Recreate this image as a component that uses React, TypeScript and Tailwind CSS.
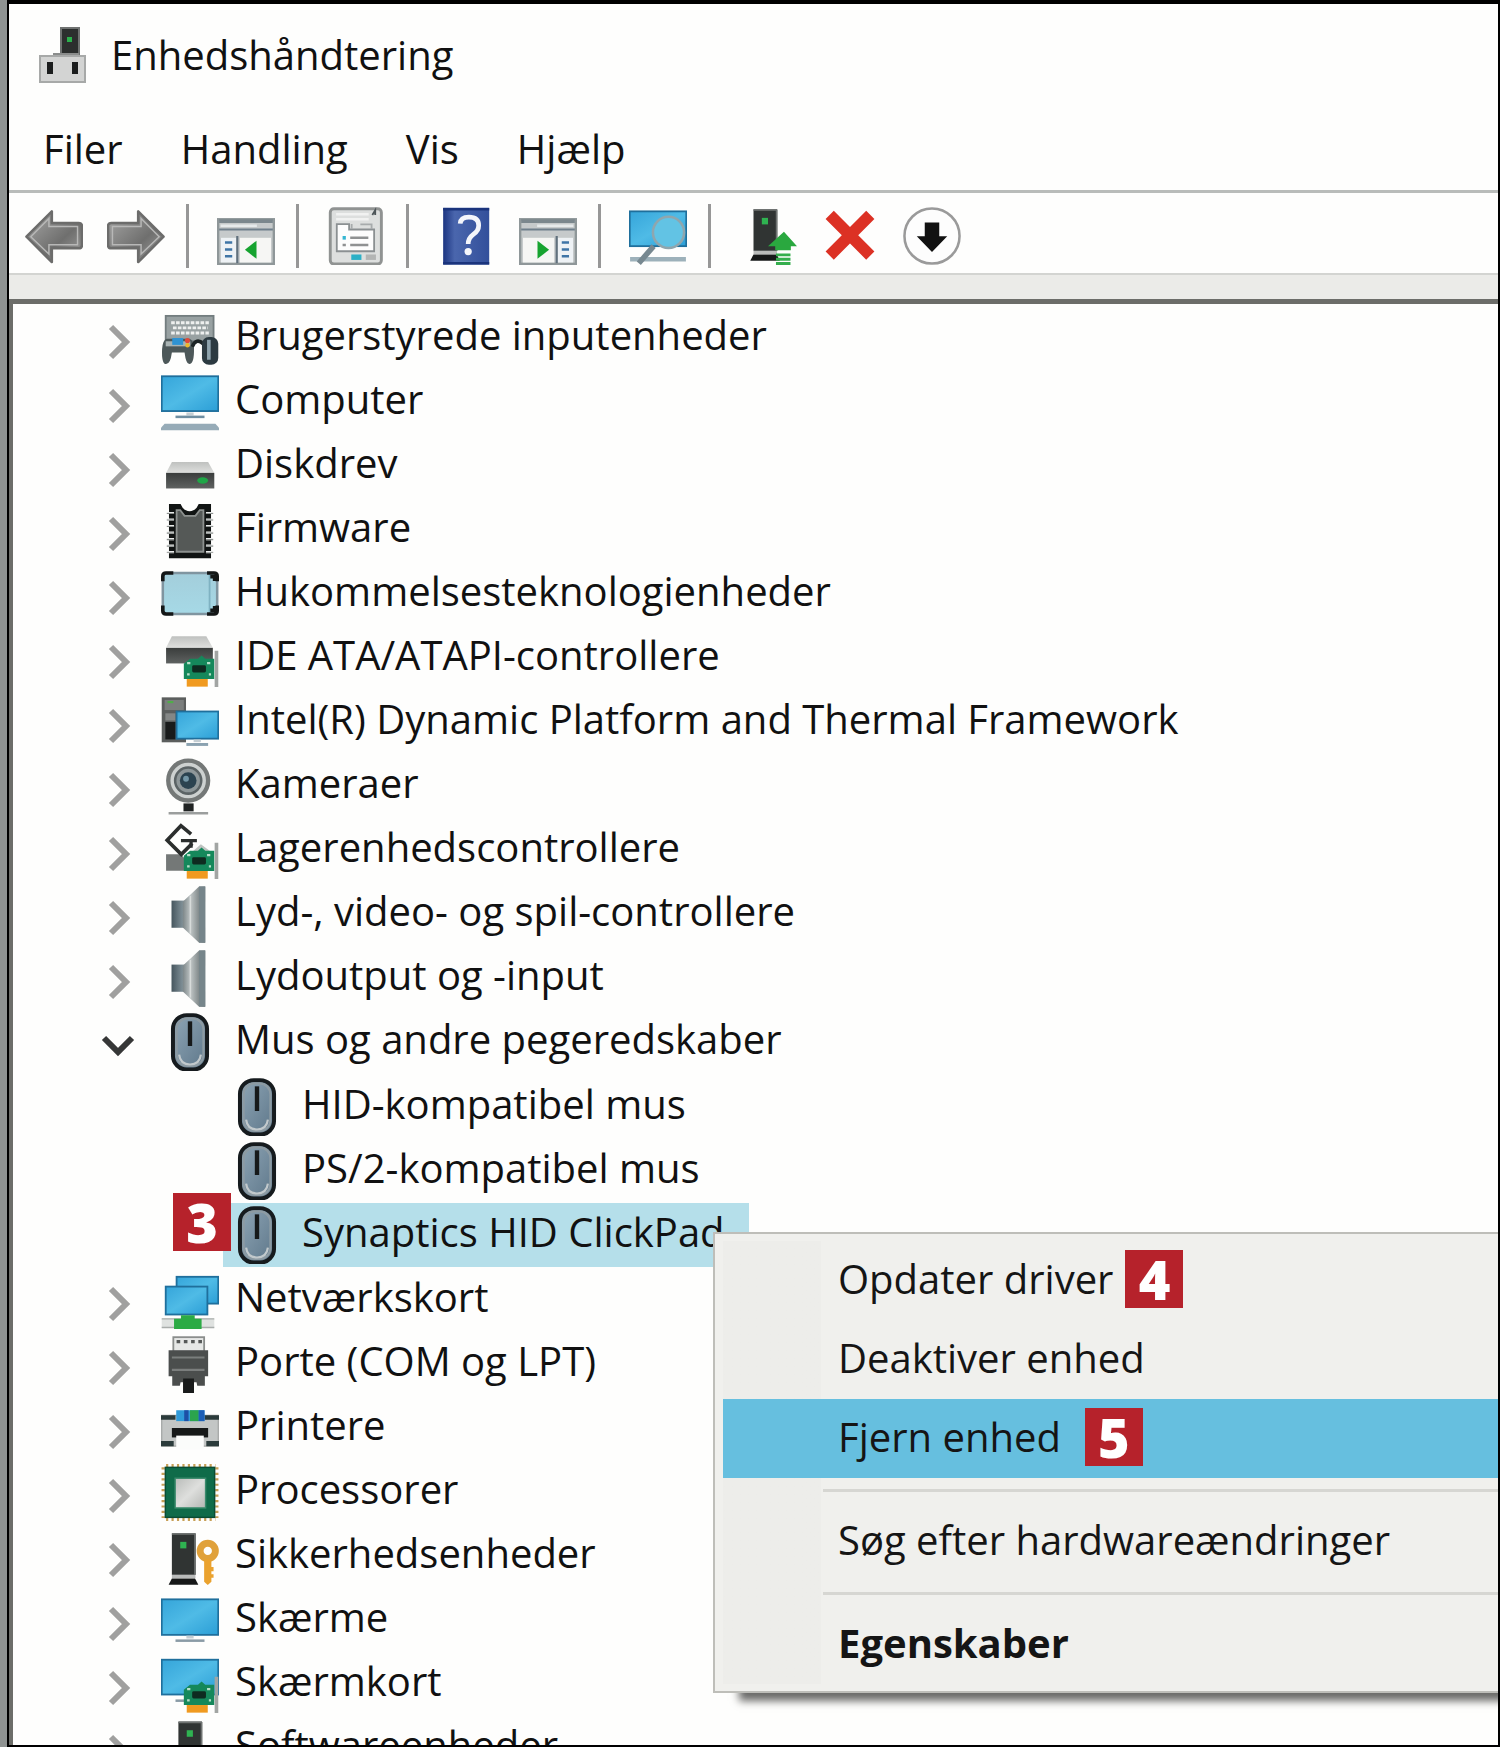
import type { ReactNode } from 'react'

type IconName =
  | 'hid'
  | 'computer'
  | 'disk'
  | 'firmware'
  | 'memory'
  | 'ide'
  | 'platform'
  | 'camera'
  | 'storage'
  | 'speaker'
  | 'mouse'
  | 'network'
  | 'port'
  | 'printer'
  | 'cpu'
  | 'security'
  | 'monitor'
  | 'display'
  | 'software'

interface Device {
  label: string
  icon: IconName
  children?: Device[]
  selected?: boolean
}

const DEVICES: Device[] = [
  { label: 'Brugerstyrede inputenheder', icon: 'hid' },
  { label: 'Computer', icon: 'computer' },
  { label: 'Diskdrev', icon: 'disk' },
  { label: 'Firmware', icon: 'firmware' },
  { label: 'Hukommelsesteknologienheder', icon: 'memory' },
  { label: 'IDE ATA/ATAPI-controllere', icon: 'ide' },
  { label: 'Intel(R) Dynamic Platform and Thermal Framework', icon: 'platform' },
  { label: 'Kameraer', icon: 'camera' },
  { label: 'Lagerenhedscontrollere', icon: 'storage' },
  { label: 'Lyd-, video- og spil-controllere', icon: 'speaker' },
  { label: 'Lydoutput og -input', icon: 'speaker' },
  {
    label: 'Mus og andre pegeredskaber',
    icon: 'mouse',
    children: [
      { label: 'HID-kompatibel mus', icon: 'mouse' },
      { label: 'PS/2-kompatibel mus', icon: 'mouse' },
      { label: 'Synaptics HID ClickPad', icon: 'mouse', selected: true },
    ],
  },
  { label: 'Netværkskort', icon: 'network' },
  { label: 'Porte (COM og LPT)', icon: 'port' },
  { label: 'Printere', icon: 'printer' },
  { label: 'Processorer', icon: 'cpu' },
  { label: 'Sikkerhedsenheder', icon: 'security' },
  { label: 'Skærme', icon: 'monitor' },
  { label: 'Skærmkort', icon: 'display' },
  { label: 'Softwareenheder', icon: 'software' },
]

/** 16-unit icon canvas shared by the toolbar and the tree. */
function Glyph({ children }: { children: ReactNode }) {
  return (
    <svg viewBox="0 0 16 16" className="size-[58px] shrink-0" aria-hidden>
      {children}
    </svg>
  )
}

/** Gradients used by several icons, defined once for the page. */
function Gradients() {
  return (
    <svg className="absolute size-0" aria-hidden>
      <defs>
        <linearGradient id="screen" x1="0" y1="0" x2="1" y2="1">
          <stop offset="0" stopColor="#35a5da" />
          <stop offset="0.5" stopColor="#4fbbe6" />
          <stop offset="1" stopColor="#2b9ed6" />
        </linearGradient>
        <linearGradient id="lid" x1="0" y1="0" x2="0" y2="1">
          <stop offset="0" stopColor="#bfc1bf" />
          <stop offset="1" stopColor="#dfe0de" />
        </linearGradient>
        <linearGradient id="drive" x1="0" y1="0" x2="0" y2="1">
          <stop offset="0" stopColor="#3a3d3c" />
          <stop offset="1" stopColor="#5f6261" />
        </linearGradient>
        <linearGradient id="cone" x1="0" y1="0" x2="1" y2="0">
          <stop offset="0" stopColor="#7c8688" />
          <stop offset="0.35" stopColor="#bfc5c5" />
          <stop offset="0.7" stopColor="#868e8f" />
          <stop offset="1" stopColor="#5a6568" />
        </linearGradient>
        <linearGradient id="cabinet" x1="0" y1="0" x2="1" y2="0">
          <stop offset="0" stopColor="#46565e" />
          <stop offset="1" stopColor="#8b9ba2" />
        </linearGradient>
        <linearGradient id="shell" x1="0" y1="0" x2="1" y2="1">
          <stop offset="0" stopColor="#8fa6b6" />
          <stop offset="1" stopColor="#5d7689" />
        </linearGradient>
        <linearGradient id="die" x1="0" y1="0" x2="1" y2="1">
          <stop offset="0" stopColor="#b9bcb9" />
          <stop offset="0.5" stopColor="#dedfdd" />
          <stop offset="1" stopColor="#b4b6b3" />
        </linearGradient>
        <linearGradient id="glass" x1="0" y1="0" x2="0" y2="1">
          <stop offset="0" stopColor="#a3cedb" />
          <stop offset="1" stopColor="#a6d9e6" />
        </linearGradient>
        <linearGradient id="steel" x1="0" y1="0" x2="1" y2="1">
          <stop offset="0" stopColor="#a9a9a8" />
          <stop offset="0.6" stopColor="#6f6f6e" />
          <stop offset="1" stopColor="#a2a2a1" />
        </linearGradient>
        <linearGradient id="book" x1="0" y1="0" x2="1" y2="0">
          <stop offset="0" stopColor="#1c3581" />
          <stop offset="0.25" stopColor="#4a66ad" />
          <stop offset="1" stopColor="#33509b" />
        </linearGradient>
      </defs>
    </svg>
  )
}

function Screen({ x, y, w, h }: { x: number; y: number; w: number; h: number }) {
  return (
    <rect x={x + 0.2} y={y + 0.2} width={w - 0.4} height={h - 0.4} fill="url(#screen)" stroke="#1f6f9c" strokeWidth="0.5" />
  )
}

function Card() {
  return (
    <>
      <path d="M6.3 9.6 8 8.2h2.2l1-.9 1 .9h2.5v5.6H6.3z" fill="#15885b" />
      <rect x="8.6" y="10" width="3.8" height="2" rx="0.4" fill="#0e2b20" />
      <path d="M7.2 9.4h.9M12.7 9.4h.9M7.2 12.5h.7M13.2 12.5h.6" stroke="#b7dfc9" strokeWidth="0.6" />
      <rect x="7.1" y="13.8" width="5.8" height="2.1" fill="#f09a20" />
      <rect x="14.8" y="6" width="1" height="10" fill="#a2a5a3" />
    </>
  )
}

function Tower() {
  return (
    <>
      <rect x="3" y="1.8" width="6.5" height="11.4" fill="#303433" />
      <path d="M3 1.9h6.5M9.4 1.8v11.4" stroke="#6f7372" strokeWidth="0.5" />
      <rect x="5.3" y="4.1" width="1.7" height="1.8" fill="#2fb351" />
      <rect x="3" y="13.2" width="6.5" height="0.9" fill="#b9bbba" />
      <path d="M3 14.2h6.4l.9 1.7H2.1z" fill="#161818" />
    </>
  )
}

function DeviceIcon({ name }: { name: IconName }) {
  switch (name) {
    case 'hid':
      return (
        <Glyph>
          <rect x="1.3" y="1.9" width="13.2" height="7" fill="#98a1a2" stroke="#737d7f" strokeWidth="0.5" />
          <path d="M2.8 3.8h10.4M3.3 5.2h9.6M2.8 6.6h10.4" stroke="#eef0ef" strokeWidth="0.8" strokeDasharray="1 .35" />
          <path
            d="M1.6 8.2h6.3q1.1.4 1.2 2.7.1 4.2-1.3 4.3-.9 0-1.3-3.2H3Q2.6 15.2 1.4 15.2.1 15.1.3 11q.2-2.5 1.3-2.8z"
            fill="#4d5859"
          />
          <path d="M1.3 9.6h6.8" stroke="#a9b3b3" strokeWidth="1.4" />
          <rect x="3.1" y="8" width="3" height="1.9" fill="#2f93d3" />
          <circle cx="7.3" cy="8.7" r="0.7" fill="#e2483a" />
          <circle cx="7.3" cy="10" r="0.6" fill="#edb82b" />
          <path d="M8.6 10.4q1.2-2.6 3-.8" fill="none" stroke="#1d2526" strokeWidth="1" />
          <rect x="11.3" y="7.7" width="4.5" height="7.7" rx="1.9" fill="#2c3a41" />
          <path d="M13.2 8.5v5.5" stroke="#8ea3ad" strokeWidth="1" />
        </Glyph>
      )
    case 'computer':
      return (
        <Glyph>
          <Screen x={0} y={0.7} w={16} h={10} />
          <path d="M7 11.3h2" stroke="#c5ced3" strokeWidth="0.8" />
          <path d="M4 12.1h8" stroke="#6f8ea1" strokeWidth="0.7" />
          <path d="M1 14h14l1 1.1v.7H0v-.7z" fill="#96abb7" />
        </Glyph>
      )
    case 'disk':
      return (
        <Glyph>
          <path d="M3 6.9h10l1.7 3H1.4z" fill="url(#lid)" />
          <rect x="1.4" y="9.9" width="13.3" height="4.3" fill="url(#drive)" />
          <ellipse cx="11.5" cy="12" rx="1.5" ry="0.9" fill="#1fa647" />
        </Glyph>
      )
    case 'firmware':
      return (
        <Glyph>
          <path d="M2.2.8h3.2q.8 2 2.5 2t2.5-2h3.4v15H2.2z" fill="#111413" />
          <path d="M4.3 2.5h1l1.2 1.6h3l1.2-1.6h1V14H4.3z" fill="#555957" stroke="#8d918f" strokeWidth="0.5" />
          <path d="M2.6 3v11.4M13.4 3v11.4" stroke="#e9ebea" strokeWidth="2" strokeDasharray=".6 1.2" />
          <path d="M2.6 3.3v11M13.4 3.3v11" stroke="#8e9290" strokeWidth="2" strokeDasharray=".3 1.5" />
        </Glyph>
      )
    case 'memory':
      return (
        <Glyph>
          <rect x="0.5" y="2.2" width="15" height="11.3" rx="0.9" fill="url(#glass)" stroke="#8095a0" strokeWidth="0.7" />
          <path d="M13.4 2.5v10.8" stroke="#7fb2c2" strokeWidth="0.5" />
          <path
            d="M.5 4.5V3.1q0-.9.9-.9h2M12.7 2.2h1.9q.9 0 .9.9v1.4M.5 11.2v1.4q0 .9.9.9h2M12.7 13.5h1.9q.9 0 .9-.9v-1.4"
            fill="none"
            stroke="#141717"
            strokeWidth="1"
          />
          <path d="M13.6 3.2h1.2v1.2M13.6 12.5h1.2v-1.2" fill="none" stroke="#141717" strokeWidth="1" />
        </Glyph>
      )
    case 'ide':
      return (
        <Glyph>
          <path d="M3 2h9.5l1.8 3.2H1.4z" fill="url(#lid)" />
          <rect x="1.4" y="5.2" width="12.9" height="4.3" fill="url(#drive)" />
          <Card />
        </Glyph>
      )
    case 'platform':
      return (
        <Glyph>
          <rect x="0.2" y="1.2" width="6.7" height="12.4" fill="#5b5e5d" />
          <rect x="1" y="1.9" width="5.3" height="2.8" fill="#7b7e7d" />
          <rect x="1.2" y="5.6" width="2.8" height="2" fill="#848786" />
          <rect x="1.2" y="8" width="2.8" height="4.8" fill="#191b1b" />
          <path d="M1.8 2.5h1.6" stroke="#4fae48" strokeWidth="0.6" />
          <Screen x={4.1} y={4.9} w={11.9} h={7.9} />
          <path d="M7 14.2h6" stroke="#8ba2b0" strokeWidth="0.8" />
          <path d="M9 13.2h2" stroke="#c5ced3" strokeWidth="0.7" />
        </Glyph>
      )
    case 'camera':
      return (
        <Glyph>
          <circle cx="7.5" cy="6.5" r="5.5" fill="#cdd1d0" stroke="#747877" strokeWidth="1.2" />
          <circle cx="7.5" cy="6.5" r="3.6" fill="#8e9799" stroke="#5b6365" strokeWidth="0.7" />
          <circle cx="7.5" cy="6.5" r="2.3" fill="#2b4350" />
          <circle cx="6.9" cy="6" r="0.8" fill="#7396a6" />
          <rect x="6.2" y="12.8" width="2.8" height="2.2" fill="#202323" />
          <path d="M2.1 15.5H13" stroke="#9b9e9d" strokeWidth="0.7" />
        </Glyph>
      )
    case 'storage':
      return (
        <Glyph>
          <path d="M1.4 9.2h4l2 2v2.5h-6z" fill="#747877" />
          <path d="M8 9l3-2.6 2.8 2.1z" fill="#bfc3c1" />
          <path d="M8.3 3.6 5.5 1.3 1.7 5.3l3.9 3.9 3-3" fill="none" stroke="#2b2e2d" strokeWidth="1" />
          <path d="M9.9 5.4H5.5M8.3 5.4v2" stroke="#2b2e2d" strokeWidth="0.9" />
          <Card />
        </Glyph>
      )
    case 'speaker':
      return (
        <Glyph>
          <rect x="2.9" y="4.3" width="3.7" height="7.5" fill="url(#cabinet)" />
          <path d="M6 4.6 10.5.4h1.7v15.5h-1.7L6 11.7z" fill="url(#cone)" />
          <path d="M10.5.4h1.7v15.5h-1.7z" fill="#76858a" />
          <path d="M8.1 3v10.4" stroke="#d7dbda" strokeWidth="0.4" />
        </Glyph>
      )
    case 'mouse':
      return (
        <Glyph>
          <rect x="3.3" y="0.6" width="9.4" height="15" rx="3.8" fill="url(#shell)" stroke="#161b1e" strokeWidth="1.1" />
          <rect x="4.3" y="1.5" width="7.4" height="13.1" rx="3" fill="none" stroke="#8d9ba3" strokeWidth="0.6" />
          <path d="M5 11.5q.3 2.7 3 2.7t3-2.7" fill="none" stroke="#c2c9cc" strokeWidth="0.6" />
          <path d="M8 2.3v6.8" stroke="#16191a" strokeWidth="1.2" />
        </Glyph>
      )
    case 'network':
      return (
        <Glyph>
          <Screen x={4.1} y={1.4} w={11.9} h={7.8} />
          <Screen x={1.1} y={4.1} w={11.9} h={8.1} />
          <path d="M.2 13.1h14.5v2.6H.2z" fill="#dfe2e0" />
          <path d="M.2 13.2h14.5M.2 15.6h14.5" stroke="#a9adab" strokeWidth="0.4" />
          <path d="M5.5 12.2h3.8v1h1.9V16H3.6v-2.8h1.9z" fill="#2cab45" />
        </Glyph>
      )
    case 'port':
      return (
        <Glyph>
          <rect x="3.4" y="0.6" width="8.5" height="4" fill="#e6e8e6" stroke="#8b8e8c" strokeWidth="0.5" />
          <path d="M4.3 1.8h1M6.3 1.8h1M8.3 1.8h1M10.3 1.8h1" stroke="#565958" strokeWidth="0.9" />
          <path d="M2.1 4.2H13v7.2h-.9V14H10l-.2-1h-.7v3h-3v-3h-.7l-.2 1H3.1v-2.6h-1z" fill="#4b4e4d" />
          <path d="M3 6.2h9M3 9.6h9" stroke="#7b7e7d" strokeWidth="0.6" />
          <path d="M6.1 12h3v4h-3z" fill="#191b1b" />
        </Glyph>
      )
    case 'printer':
      return (
        <Glyph>
          <rect x="0.2" y="4.5" width="15.6" height="8.5" fill="#c3c6c5" stroke="#9a9d9c" strokeWidth="0.3" />
          <path d="M0 4.5h4v1.2H0zM12 4.5h4v1.2h-4zM0 11.6h3.5V13H0zM12.5 11.6H16V13h-3.5z" fill="#2b3b3b" />
          <rect x="3" y="8" width="10" height="2.6" fill="#161818" />
          <rect x="4.2" y="10.1" width="7.6" height="3.9" fill="#fbfcfb" />
          <rect x="4.2" y="3.1" width="7.8" height="3" fill="#2f9ad9" />
          <path d="M6.4 3.1h1.2v3H6.4z" fill="#1d4fa6" />
          <path d="M8 3.1h2.4v3H8z" fill="#2ba44d" />
          <path d="M10.4 3.1H12v3h-1.6z" fill="#1d5fb6" />
        </Glyph>
      )
    case 'cpu':
      return (
        <Glyph>
          <path d="M1.4.7H15M1.4 15.6H15M.6 1.2v14M15.4 1.2v14" stroke="#c79f56" strokeWidth="0.9" strokeDasharray=".6 .9" />
          <rect x="1.2" y="1.2" width="13.6" height="13.8" fill="#0f6b49" stroke="#0a4c34" strokeWidth="0.4" />
          <rect x="3.9" y="4.2" width="8.4" height="8.2" fill="url(#die)" stroke="#3b8a6c" strokeWidth="0.4" />
        </Glyph>
      )
    case 'security':
      return (
        <Glyph>
          <Tower />
          <circle cx="12.9" cy="6.6" r="2.1" fill="none" stroke="#e0a13a" strokeWidth="1.9" />
          <path d="M11.9 8.9h2v6.2l-1 .9-1-.9z" fill="#eaa22e" />
          <path d="M13.9 11v1.2M13.9 13v1" stroke="#eaa22e" strokeWidth="1.2" />
        </Glyph>
      )
    case 'monitor':
      return (
        <Glyph>
          <Screen x={0} y={2.1} w={16} h={10.2} />
          <path d="M7 12.7h2" stroke="#c5ced3" strokeWidth="0.8" />
          <path d="M4 13.7h8" stroke="#8a9ba6" strokeWidth="0.7" />
        </Glyph>
      )
    case 'display':
      return (
        <Glyph>
          <Screen x={0} y={1.1} w={16} h={10} />
          <path d="M4 12.6h4" stroke="#8a9ba6" strokeWidth="0.7" />
          <Card />
        </Glyph>
      )
    case 'software':
      return (
        <Glyph>
          <g transform="translate(1.8 -1)">
            <Tower />
          </g>
        </Glyph>
      )
  }
}

function StepBadge({ step, className = '' }: { step: number; className?: string }) {
  return (
    <span
      className={`flex size-[58px] items-center justify-center bg-[#b6222b] text-[54px] leading-none font-extrabold text-white ${className}`}
    >
      {step}
    </span>
  )
}

function Chevron({ open }: { open: boolean }) {
  return (
    <button type="button" aria-label={open ? 'Skjul' : 'Udvid'} className="mt-2 flex w-10 shrink-0 justify-center">
      <svg viewBox="0 0 40 40" className="size-10" fill="none" strokeWidth="6" aria-hidden>
        {open ? <path d="M7 12 21 26 35 12" stroke="#363737" /> : <path d="M14 5 29 20 14 35" stroke="#a0a09f" />}
      </svg>
    </button>
  )
}

function MenuItem({ label, step, active, bold }: { label: string; step?: number; active?: boolean; bold?: boolean }) {
  return (
    <button
      type="button"
      role="menuitem"
      className={`flex h-[79px] w-full items-center pb-1 pl-[115px] whitespace-nowrap ${active ? 'bg-[#66bfdf]' : ''} ${
        bold ? 'font-bold' : ''
      }`}
    >
      {label}
      {step && <StepBadge step={step} className={active ? 'ml-6' : 'ml-3'} />}
    </button>
  )
}

function MenuDivider() {
  return (
    <div role="separator" className="flex h-6 items-center pl-[100px]">
      <div className="h-[3px] w-full bg-[#d6d6d2]" />
    </div>
  )
}

function ContextMenu() {
  return (
    <div
      role="menu"
      className="absolute top-[29px] right-0 left-[700px] z-10 border-y-2 border-l-2 border-[#bebeb9] bg-[#f0f0ed] py-[7px] pl-2 text-[#151515] shadow-[24px_10px_8px_-2px_#6b6b69]"
    >
      <div className="bg-linear-to-r from-[#ededea] from-[98px] to-[#f0f0ed] to-[98px]">
        <MenuItem label="Opdater driver" step={4} />
        <MenuItem label="Deaktiver enhed" />
        <MenuItem label="Fjern enhed" step={5} active />
        <MenuDivider />
        <MenuItem label="Søg efter hardwareændringer" />
        <MenuDivider />
        <MenuItem label="Egenskaber" bold />
      </div>
    </div>
  )
}

function DeviceRow({ device }: { device: Device }) {
  return (
    <li role="treeitem" aria-selected={!!device.selected} aria-expanded={device.children ? true : undefined}>
      <div className="flex h-16 items-center pl-[84px]">
        <Chevron open={!!device.children} />
        <div className="ml-6 flex h-16 items-center gap-4">
          <DeviceIcon name={device.icon} />
          <span className="pb-1.5 whitespace-nowrap">{device.label}</span>
        </div>
      </div>
      {device.children && (
        <ul role="group" className="py-px">
          {device.children.map((child) => (
            <ChildRow key={child.label} device={child} />
          ))}
        </ul>
      )}
    </li>
  )
}

function ChildRow({ device }: { device: Device }) {
  return (
    <li role="treeitem" aria-selected={!!device.selected} className="relative flex h-16 pl-[210px]">
      <div className={`flex items-center gap-4 pr-6 pl-[5px] ${device.selected ? 'bg-[#b5dfea]' : ''}`}>
        <DeviceIcon name={device.icon} />
        <span className="pb-1.5 whitespace-nowrap">{device.label}</span>
      </div>
      {device.selected && (
        <>
          <StepBadge step={3} className="absolute -top-2.5 left-40" />
          <ContextMenu />
        </>
      )}
    </li>
  )
}

function ToolButton({ label, className = '', children }: { label: string; className?: string; children: ReactNode }) {
  return (
    <button type="button" aria-label={label} className={`shrink-0 ${className}`}>
      <Glyph>{children}</Glyph>
    </button>
  )
}

function ToolDivider() {
  return <div className="mr-7 ml-[21px] h-16 w-[3px] shrink-0 bg-[#979797]" />
}

/** Console window with a side pane; mirrored when the pane is on the right. */
function PaneWindow({ mirrored }: { mirrored?: boolean }) {
  return (
    <g transform={mirrored ? 'translate(16 0) scale(-1 1)' : undefined}>
      <rect x="0.3" y="3.4" width="15.4" height="12.3" fill="#c6cacb" stroke="#8f9799" strokeWidth="0.7" />
      <path d="M.6 3.9h14.8" stroke="#7b878d" strokeWidth="1" />
      <path d="M1 5.200h10" stroke="#e6eaeb" strokeWidth="0.7" />
      <path d="M.6 6.2h14.8" stroke="#6f7f8b" strokeWidth="0.6" />
      <rect x="1.1" y="8.5" width="4.3" height="6.8" fill="#eef2f5" />
      <path d="M2.2 9.8h2M2.2 11.7h2M2.2 13.6h2" stroke="#3f75a6" strokeWidth="0.7" />
      <path d="M5.6 8v7.500" stroke="#61717d" strokeWidth="0.6" />
      <rect x="6.3" y="8.5" width="8.6" height="6.8" fill="#f6f6f4" />
      <path d="M10.9 9.3v5l-3.2-2.5z" fill="#16a32f" />
    </g>
  )
}

function Toolbar() {
  return (
    <div role="toolbar" className="flex h-20 items-center pt-[5px] pl-4">
      <ToolButton label="Tilbage">
        <path
          d="M.4 8.2 7.4 1.2v3.2h7.4q.9 0 .9.9v5.200q0 .9-.9.9H7.4v3.8z"
          fill="url(#steel)"
          stroke="#6c6c6b"
          strokeWidth="0.7"
          strokeLinejoin="round"
        />
        <path d="M1.6 8.2 6.6 3.2v2.2h7.9v5H6.6V13z" fill="none" stroke="#b8b8b7" strokeWidth="0.4" />
      </ToolButton>
      <ToolButton label="Frem" className="ml-6">
        <path
          d="M15.6 8.2 8.6 1.2v3.2H1.2q-.9 0-.9.9v5.200q0 .9.9.9h7.4v3.8z"
          fill="url(#steel)"
          stroke="#6c6c6b"
          strokeWidth="0.7"
          strokeLinejoin="round"
        />
        <path d="M14.4 8.2 9.4 3.2v2.2H1.5v5h7.9V13z" fill="none" stroke="#b8b8b7" strokeWidth="0.4" />
      </ToolButton>
      <ToolDivider />
      <ToolButton label="Vis/skjul konsoltræ">
        <PaneWindow />
      </ToolButton>
      <ToolDivider />
      <ToolButton label="Egenskaber">
        <rect x="0.9" y="0.5" width="14.1" height="15.2" rx="1" fill="#dddfde" stroke="#909392" strokeWidth="0.8" />
        <path d="M2.5 2h9M2.5 3.4h9" stroke="#f1f2f1" strokeWidth="0.7" />
        <path d="M12.5 2.2 13.3.9v1.3" stroke="#4d5558" strokeWidth="0.5" fill="none" />
        <path d="M2.7 4.7h3.4v1.5H13v6H2.7z" fill="#fdfdfd" stroke="#8b9092" strokeWidth="0.5" />
        <path d="M6.8 4.7v1.4M9.2 4.8h3.1v1.3" stroke="#a7abac" strokeWidth="0.5" fill="none" />
        <path d="M4.3 8.5h.9" stroke="#35b6d2" strokeWidth="1" />
        <path d="M4.3 10.5h.9M6.4 8.5h5M6.4 10.5h5" stroke="#8f9192" strokeWidth="0.7" />
        <rect x="6.7" y="13.1" width="2.8" height="1.5" fill="#2cb0c6" />
        <rect x="10.7" y="13.1" width="2.8" height="1.5" fill="#b3b5b4" />
      </ToolButton>
      <ToolDivider />
      <ToolButton label="Hjælp">
        <rect x="1.7" y="0.2" width="12.7" height="15.7" fill="url(#book)" />
        <path d="M1.7.6h12.7M1.7 15.5h12.7" stroke="#1b347c" strokeWidth="0.7" />
        <path
          d="M6.4 4.6q.1-1.8 2.4-1.8 2.7 0 2.7 2.3 0 1.4-1.4 2.4-1.5 1.1-1.5 2.7"
          fill="none"
          stroke="#f4f6fb"
          strokeWidth="1.3"
        />
        <circle cx="8.6" cy="12.3" r="1" fill="#f4f6fb" />
      </ToolButton>
      <ToolButton label="Vis/skjul handlingsrude" className="ml-6">
        <PaneWindow mirrored />
      </ToolButton>
      <ToolDivider />
      <ToolButton label="Søg efter hardwareændringer">
        <Screen x={0} y={1} w={16} h={10} />
        <path d="M.3 13.8h15.400V15H.3z" fill="#9db1ba" />
        <path d="M6.8 10.8 2.7 15.5" stroke="#778890" strokeWidth="1.5" />
        <circle cx="10.9" cy="7" r="4.3" fill="#62c3e4" stroke="#8fa6ae" strokeWidth="0.7" />
      </ToolButton>
      <ToolDivider />
      <ToolButton label="Opdater driver">
        <g transform="translate(1 -1.1)">
          <Tower />
        </g>
        <path d="M12.4 6.8 16 10.8h-1.700v1.100H10v-1.100H8z" fill="#2aa83f" />
        <path d="M10.200 13.200h4M10.200 14.400h4M10.200 15.600h4" stroke="#35ae4d" strokeWidth="0.8" />
      </ToolButton>
      <ToolButton label="Fjern enhed" className="ml-6">
        <path d="M2.4 2.200 13.6 13.400M13.6 2.200 2.4 13.400" stroke="#dc3124" strokeWidth="3.2" />
      </ToolButton>
      <ToolButton label="Deaktiver enhed" className="ml-6">
        <circle cx="8" cy="8" r="7.600" fill="#fdfdfd" stroke="#9a9a9a" strokeWidth="0.7" />
        <path d="M6 4.300h4v3.800h2.200L8 12.400 3.800 8.100H6z" fill="#111" />
      </ToolButton>
    </div>
  )
}

export default function App() {
  return (
    <div className="flex h-screen overflow-hidden bg-[#8f9392] font-['Open_Sans','Noto_Sans',sans-serif] text-[40px] leading-[56px] text-[#111]">
      <Gradients />
      <div className="ml-[7px] flex min-w-0 flex-1 flex-col border-t-4 border-r-2 border-b-2 border-l-2 border-black bg-[#fefefd]">
        <header className="flex h-24 items-center gap-[22px] pt-1.5 pl-[26px]">
          <svg viewBox="0 0 54 62" className="h-[62px] w-[54px]" aria-hidden>
            <rect x="26" y="4" width="18" height="27" fill="#2c2f2e" stroke="#6f7271" strokeWidth="2" />
            <rect x="32" y="13" width="5" height="5" fill="#2bb04c" />
            <path d="M18 29h26v5H18z" fill="#8b8d8c" />
            <rect x="5" y="32" width="45" height="26" fill="#d3d4d3" stroke="#a7a9a8" strokeWidth="2" />
            <path d="M12 38h6v12h-6zM37 38h6v12h-6z" fill="#1b1d1d" />
          </svg>
          <h1>Enhedshåndtering</h1>
        </header>
        <nav className="flex h-[90px] items-center gap-[58px] pt-2 pl-[34px]">
          <button type="button">Filer</button>
          <button type="button">Handling</button>
          <button type="button">Vis</button>
          <button type="button">Hjælp</button>
        </nav>
        <div className="border-t-[3px] border-[#b9bcba]">
          <Toolbar />
        </div>
        <div className="h-[26px] shrink-0 border-t-2 border-[#d3d4d1] bg-[#ebebe8]" />
        <main className="flex-1 overflow-hidden border-t-[5px] border-l-4 border-[#6c6d69] pt-0.5">
          <ul role="tree" aria-label="Enheder">
            {DEVICES.map((device) => (
              <DeviceRow key={device.label} device={device} />
            ))}
          </ul>
        </main>
      </div>
    </div>
  )
}
